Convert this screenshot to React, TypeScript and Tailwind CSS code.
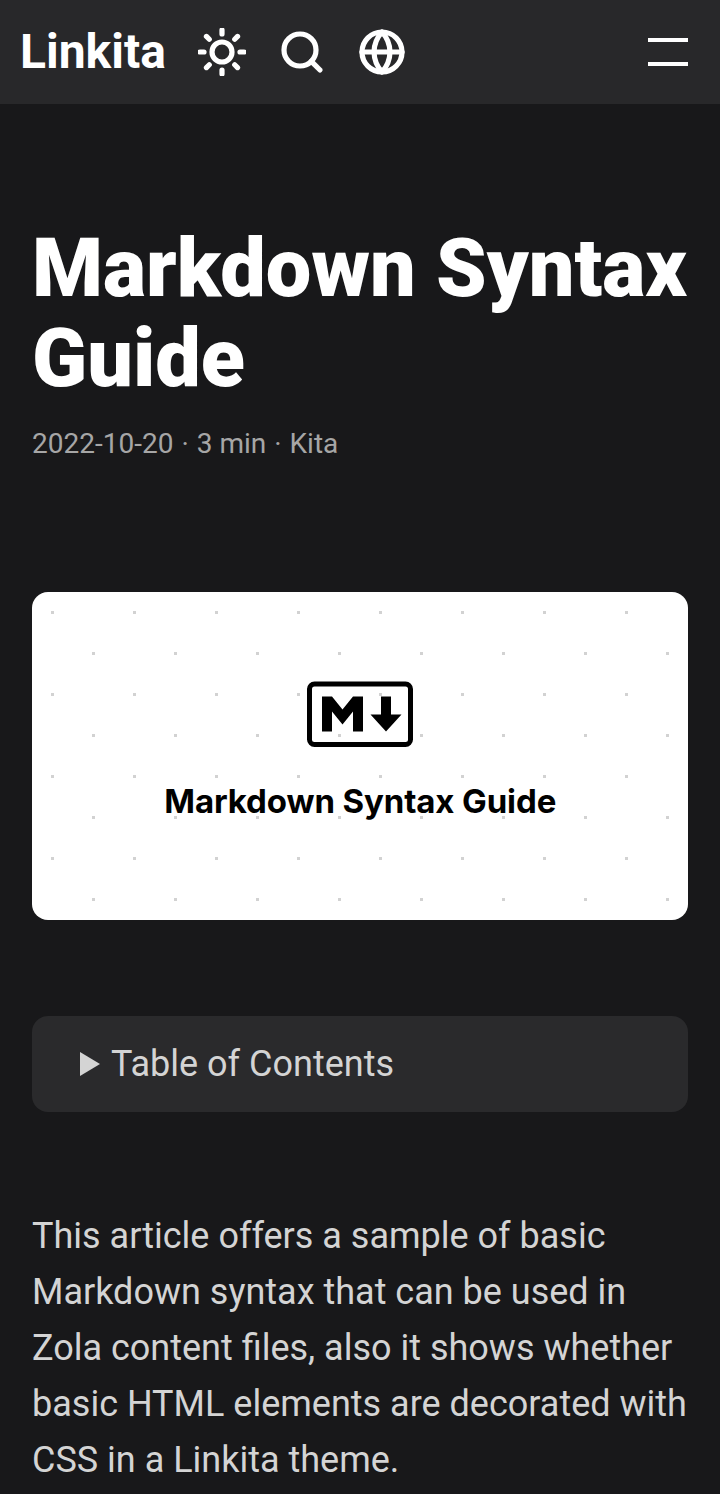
import React from "react";

const dots: { x: number; y: number }[] = [];
for (let row = 0; row < 8; row++) {
  for (let col = 0; col < 8; col++) {
    dots.push({ x: 20 + col * 82 + (row % 2) * 41, y: 20 + row * 41 });
  }
}

function Header() {
  return (
    <header className="flex h-[104px] items-center bg-[#28282a] pl-5 pr-8">
      <a className="w-[178px] text-[48px] font-bold leading-none text-white">Linkita</a>
      <svg className="h-12 w-12" viewBox="0 0 24 24" fill="none" stroke="white" strokeWidth="2.6" strokeLinecap="round">
        <circle cx="12" cy="12" r="5" />
        <path d="M12 1v2M12 21v2M4.22 4.22l1.42 1.42M18.36 18.36l1.42 1.42M1 12h2M21 12h2M4.22 19.78l1.42-1.42M18.36 5.64l1.42-1.42" />
      </svg>
      <svg className="ml-8 h-12 w-12" viewBox="0 0 24 24" fill="none" stroke="white" strokeWidth="2.6" strokeLinecap="round">
        <circle cx="11" cy="11" r="8" />
        <path d="m21 21-4.35-4.35" />
      </svg>
      <svg className="ml-8 h-12 w-12" viewBox="0 0 24 24" fill="none" stroke="white" strokeWidth="2.6" strokeLinecap="round" strokeLinejoin="round">
        <circle cx="12" cy="12" r="10" />
        <path d="M2 12h20M12 2a15.3 15.3 0 0 1 4 10 15.3 15.3 0 0 1-4 10 15.3 15.3 0 0 1-4-10 15.3 15.3 0 0 1 4-10z" />
      </svg>
      <div className="ml-auto flex w-10 flex-col gap-5">
        <span className="h-1 bg-white" />
        <span className="h-1 bg-white" />
      </div>
    </header>
  );
}

function Cover() {
  return (
    <svg className="mt-[128px] block h-[328px] w-[656px] rounded-2xl bg-white" viewBox="0 0 656 328">
      {dots.map((d) => (
        <rect key={`${d.x}-${d.y}`} x={d.x - 1} y={d.y - 1} width="3" height="3" fill="#d2d2d2" />
      ))}
      <rect x="277.5" y="92" width="101" height="60.5" rx="5" fill="none" stroke="black" strokeWidth="5" />
      <path d="M290 139.500v-35h10l10.500 13L321 104.500h10v35h-10v-20l-10.500 13-10.500-13v20zM354 139.500l-15.500-17h10.500v-18h10v18h10.500z" />
      <text x="328.300" y="220.500" textAnchor="middle" textLength="392" className="font-[Inter] text-[33px] font-bold [font-optical-sizing:none]">
        Markdown Syntax Guide
      </text>
    </svg>
  );
}

export default function App() {
  return (
    <div className="h-[1494px] overflow-hidden bg-[#18181a] font-[Roboto,sans-serif]">
      <Header />
      <main className="px-8 pt-[120px]">
        <h1 className="whitespace-nowrap text-[81px] font-black leading-[90px] text-white">
          Markdown Syntax
          <br />
          Guide
        </h1>
        <p className="mt-5 flex gap-2 text-[28px] leading-10 text-[#a6a6a6]">
          <span>2022-10-20</span>
          <span>·</span>
          <span>3 min</span>
          <span>·</span>
          <span>Kita</span>
        </p>
        <Cover />
        <div className="mt-24 flex h-24 items-center rounded-2xl bg-[#2a2a2c] pl-12 text-[36px] text-[#d4d4d4]">
          <svg className="mr-[11px] h-6 w-5" viewBox="0 0 20 24" fill="currentColor">
            <path d="M0 0v24l20-12z" />
          </svg>
          Table of Contents
        </div>
        <p className="mt-24 whitespace-nowrap text-[36px] leading-[56px] text-[#d4d4d4]">
          This article offers a sample of basic
          <br />
          Markdown syntax that can be used in
          <br />
          Zola content files, also it shows whether
          <br />
          basic HTML elements are decorated with
          <br />
          CSS in a Linkita theme.
        </p>
      </main>
    </div>
  );
}
